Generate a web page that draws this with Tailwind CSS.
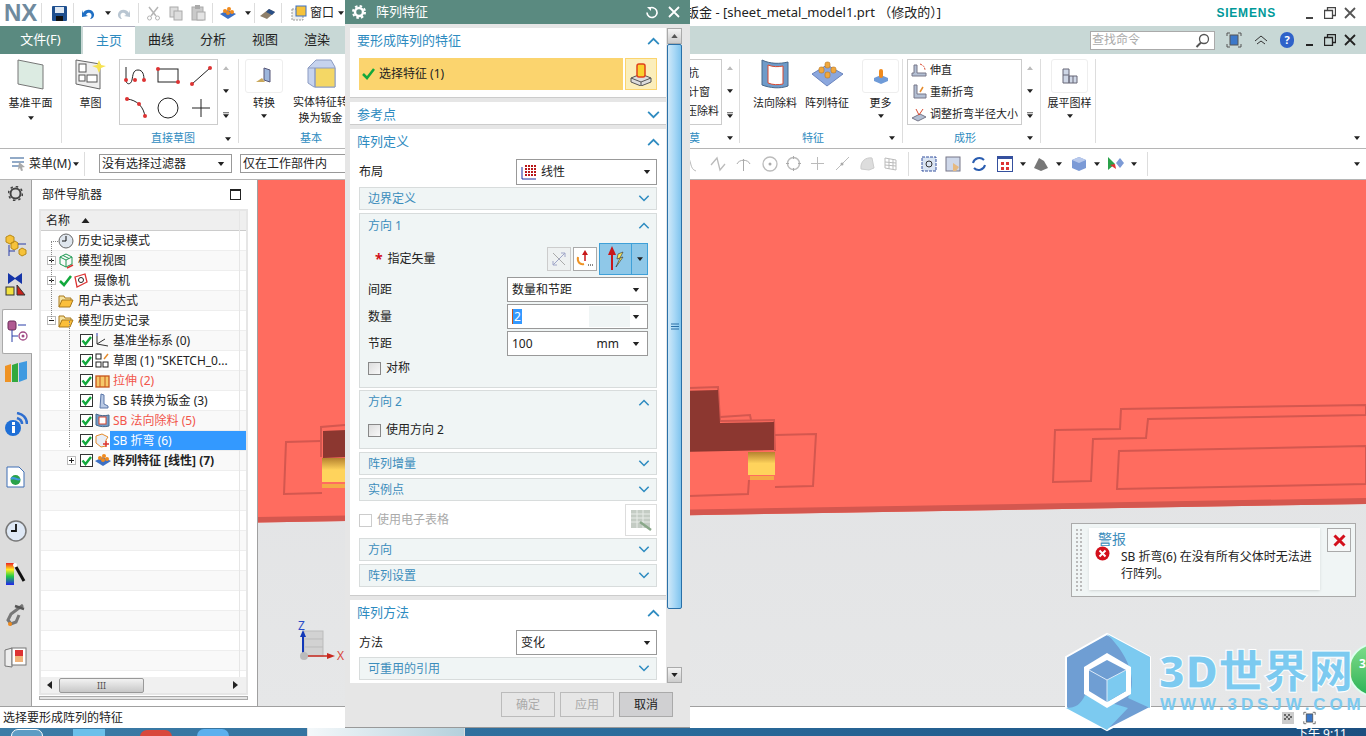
<!DOCTYPE html>
<html lang="en">
<head>
  <meta charset="UTF-8">
  <title>NX 11 - 钣金</title>
  <script src="https://cdn.jsdelivr.net/npm/@tailwindcss/browser@4"></script>
</head>
<body class="relative h-[736px] w-[1366px] overflow-hidden bg-white font-['Noto_Sans','Noto_Sans_CJK_SC',sans-serif] text-xs text-[#222]">

  <!-- shared icons -->
  <svg class="hidden">
    <symbol id="caret" viewBox="0 0 8 5"><polygon points="0,0 8,0 4,5" fill="#222"/></symbol>
    <symbol id="up" viewBox="0 0 14 9"><path d="M1 8 7 2l6 6" fill="none" stroke="#2e8bc0" stroke-width="2"/></symbol>
    <symbol id="down" viewBox="0 0 14 9"><path d="M1 1l6 6 6-6" fill="none" stroke="#2e8bc0" stroke-width="2"/></symbol>
    <symbol id="check" viewBox="0 0 13 13"><rect x=".5" y=".5" width="12" height="12" fill="#fff" stroke="#333"/><path d="M2.5 6.5l3 3.5 5.5-7" fill="none" stroke="#12a83c" stroke-width="2.4"/></symbol>
    <symbol id="plus" viewBox="0 0 9 9"><rect x=".5" y=".5" width="8" height="8" fill="#fff" stroke="#bbb"/><path d="M2 4.5h5M4.500 2v5" stroke="#222"/></symbol>
    <symbol id="minus" viewBox="0 0 9 9"><rect x=".5" y=".5" width="8" height="8" fill="#fff" stroke="#bbb"/><path d="M2 4.500h5" stroke="#222"/></symbol>
    <symbol id="folder" viewBox="0 0 16 14"><path d="M1 13V2h5l1 2h6v2" fill="#f6e3a0" stroke="#a9791c"/><path d="M1 13l3-7h11l-3 7z" fill="#fbbf3b" stroke="#a9791c"/></symbol>
  </svg>

  <!-- title bar -->
  <header class="flex h-[26px] items-center bg-white">
    <span class="ml-[4px] w-[33px] font-['Liberation_Sans',sans-serif] text-[24px] leading-none font-bold text-[#6f8a9e]">NX</span>
    <div class="ml-[4px] h-[20px] w-px bg-[#ddd]"></div>
    <svg class="ml-[10px]" width="15" height="15" viewBox="0 0 15 15"><rect width="15" height="15" rx="1" fill="#1e4f8f"/><rect x="3" y="1" width="9" height="6" fill="#dfe8f2"/><rect x="4" y="10" width="7" height="5" fill="#111"/></svg>
    <div class="ml-[6px] h-[20px] w-px bg-[#ddd]"></div>
    <svg class="ml-[7px]" width="14" height="13" viewBox="0 0 14 13"><path d="M2 6c3-5 10-4 11 1 .5 3-2 5-4 5 2-2 2-5 0-6-2-.7-3 0-4 2l2 1-6 1V3z" fill="#1f6fc4"/></svg>
    <svg class="ml-[10px]" width="6" height="4"><use href="#caret"/></svg>
    <svg class="ml-[6px]" width="14" height="13" viewBox="0 0 14 13"><path d="M12 6C9 1 2 2 1 7c-.5 3 2 5 4 5-2-2-2-5 0-6 2-.7 3 0 4 2L7 9l6 1V3z" fill="#b9c6d2"/></svg>
    <div class="ml-[7px] h-[20px] w-px bg-[#ddd]"></div>
    <svg class="ml-[7px]" width="15" height="15" viewBox="0 0 15 15"><path d="M3 1l7 9M12 1L5 10" stroke="#b5b5b5" stroke-width="1.500"/><circle cx="3.500" cy="12" r="2" fill="none" stroke="#b5b5b5"/><circle cx="11.500" cy="12" r="2" fill="none" stroke="#b5b5b5"/></svg>
    <svg class="ml-[8px]" width="14" height="15" viewBox="0 0 14 15"><rect x="1" y="1" width="8" height="10" fill="#ddd" stroke="#aaa"/><rect x="5" y="5" width="8" height="9" fill="#ddd" stroke="#aaa"/></svg>
    <svg class="ml-[8px]" width="15" height="16" viewBox="0 0 15 16"><rect x="1" y="2" width="11" height="13" fill="#c9c9c9" stroke="#aaa"/><rect x="4" y="0" width="5" height="4" fill="#aaa"/><rect x="6" y="7" width="8" height="8" fill="#e4e4e4" stroke="#aaa"/></svg>
    <div class="ml-[6px] h-[20px] w-px bg-[#ddd]"></div>
    <svg class="ml-[7px]" width="16" height="13" viewBox="0 0 16 13"><path d="M8 3l8 4-8 5-8-5z" fill="#3b6fc4"/><circle cx="5" cy="4" r="2" fill="#f08a1c"/><circle cx="9" cy="2" r="2" fill="#f08a1c"/><circle cx="8" cy="6" r="2" fill="#f08a1c"/><circle cx="12" cy="5" r="2" fill="#f08a1c"/></svg>
    <svg class="ml-[9px]" width="6" height="4"><use href="#caret"/></svg>
    <div class="ml-[3px] h-[20px] w-px bg-[#ddd]"></div>
    <svg class="ml-[4px]" width="17" height="11" viewBox="0 0 17 11"><path d="M1 8l9-7 6 3-8 7z" fill="#8e7f6a"/><path d="M10 1l6 3-3 3-6-3z" fill="#2a4f86"/></svg>
    <div class="ml-[5px] h-[20px] w-px bg-[#ddd]"></div>
    <svg class="ml-[9px]" width="16" height="16" viewBox="0 0 16 16"><rect x="1" y="4" width="11" height="11" fill="#eee" stroke="#999" stroke-dasharray="2 1"/><rect x="5" y="1" width="10" height="10" fill="#f6c23a" stroke="#3b6fc4"/></svg>
    <span class="ml-[3px] text-[12px]">窗口</span>
    <svg class="ml-[4px]" width="6" height="4"><use href="#caret"/></svg>
    <span class="ml-[342px] text-[13px] whitespace-nowrap text-[#222]">钣金 - [sheet_metal_model1.prt （修改的）]</span>
    <span class="ml-auto font-['Liberation_Sans',sans-serif] text-[12px] font-bold tracking-[0.8px] text-[#009999]">SIEMENS</span>
    <span class="ml-[29px] flex w-[54px] items-center justify-between pr-[3px]">
      <svg width="10" height="12" viewBox="0 0 10 12"><path d="M1 11h7" stroke="#444" stroke-width="2"/></svg>
      <svg width="12" height="12" viewBox="0 0 12 12"><path d="M3.500 3V.5h8v8H9M.5 3.500h8v8h-8z" fill="none" stroke="#444" stroke-width="1.300"/></svg>
      <svg width="12" height="12" viewBox="0 0 12 12"><path d="M1 1l10 10M11 1 1 11" stroke="#555" stroke-width="1.800"/></svg>
    </span>
    <span class="w-[7px]"></span>
  </header>

  <!-- tabs -->
  <nav class="flex h-[28px] items-center bg-[#c8d8d6] text-[13px]">
    <div class="flex h-full w-[81px] items-center justify-center bg-[#5a8a80] text-white">文件(F)</div>
    <div class="ml-[2px] flex h-full w-[52px] items-center justify-center border-t border-[#aab] bg-white text-[#2e8bc0]">主页</div>
    <div class="flex w-[52px] justify-center">曲线</div>
    <div class="flex w-[52px] justify-center">分析</div>
    <div class="flex w-[52px] justify-center">视图</div>
    <div class="flex w-[52px] justify-center">渲染</div>
    <div class="ml-auto flex h-[19px] w-[125px] items-center justify-between border border-[#aaa] bg-white pr-[4px] pl-[1px] text-[12px] text-[#aaa]">
      查找命令
      <svg width="15" height="15" viewBox="0 0 15 15"><circle cx="9" cy="6" r="4.500" fill="#fff" stroke="#555" stroke-width="1.300"/><path d="M6 9.500 1.500 14" stroke="#555" stroke-width="2"/></svg>
    </div>
    <svg class="ml-[11px]" width="16" height="16" viewBox="0 0 16 16"><path d="M1 4V1h3M12 1h3v3M15 12v3h-3M4 15H1v-3" fill="none" stroke="#555"/><rect x="4" y="3" width="8" height="10" fill="#3b78c9" stroke="#555"/></svg>
    <svg class="ml-[12px]" width="14" height="10" viewBox="0 0 14 10"><path d="M1 6l6-5 6 5M3 9l4-3 4 3" fill="none" stroke="#333"/></svg>
    <span class="ml-[12px] flex h-[16px] w-[14px] items-center justify-center rounded-full bg-[#2f62c9] text-[11px] font-bold text-white">?</span>
    <span class="ml-[11px] flex w-[54px] items-center justify-between pr-[3px]">
      <svg width="10" height="12" viewBox="0 0 10 12"><path d="M1 11h7" stroke="#222" stroke-width="2"/></svg>
      <svg width="12" height="12" viewBox="0 0 12 12"><path d="M3.500 3V.5h8v8H9M.5 3.500h8v8h-8z" fill="none" stroke="#222" stroke-width="1.300"/></svg>
      <svg width="12" height="12" viewBox="0 0 12 12"><path d="M1 1l10 10M11 1 1 11" stroke="#222" stroke-width="1.800"/></svg>
    </span>
    <span class="w-[7px]"></span>
  </nav>

  <!-- ribbon -->
  <section class="relative flex h-[94px] bg-white text-[11px] leading-[16px]">
    <!-- 基准平面 -->
    <div class="my-[5px] flex w-[62px] flex-col items-center border-r border-[#ddd]">
      <svg width="27" height="31" viewBox="0 0 27 31"><path d="M1 1l25 5v24L1 25z" fill="#dcebe2" stroke="#777"/></svg>
      <span class="mt-[5px]">基准平面</span>
      <svg class="mt-[5px]" width="6" height="4"><use href="#caret"/></svg>
    </div>
    <!-- 直接草图 -->
    <div class="relative my-[5px] w-[177px] border-r border-[#ddd]">
      <div class="flex">
        <div class="ml-[13px] flex w-[31px] flex-col items-center">
          <svg width="31" height="31" viewBox="0 0 31 31"><path d="M1 1l24 4v25L1 25z" fill="#eee" stroke="#666"/><rect x="4" y="5" width="7" height="8" fill="#fff" stroke="#555"/><rect x="4" y="16" width="6" height="6" fill="#fff" stroke="#555"/><rect x="12" y="16" width="10" height="7" fill="#fff" stroke="#555"/><path d="M24 1l2 5 5 1-5 2-2 5-2-5-5-2 5-1z" fill="#f7e34f"/></svg>
          <span class="mt-[5px]">草图</span>
        </div>
        <div class="ml-[13px] grid h-[66px] w-[99px] grid-cols-3 place-items-center border border-[#ccc]">
          <svg width="24" height="20" viewBox="0 0 24 20"><path d="M2 1v13c0 5 5 5 6 0s1-10 6-10 6 5 6 10" fill="none" stroke="#222"/><circle cx="2" cy="14" r="2" fill="#d33"/><circle cx="11" cy="14" r="2" fill="#d33"/><circle cx="20" cy="14" r="2" fill="#d33"/></svg>
          <svg width="24" height="18" viewBox="0 0 24 18"><rect x="2" y="2" width="20" height="13" fill="none" stroke="#222"/><circle cx="2" cy="2" r="2" fill="#d33"/><circle cx="22" cy="15" r="2" fill="#d33"/></svg>
          <svg width="22" height="20" viewBox="0 0 22 20"><path d="M2 18 20 2" stroke="#222"/><circle cx="2" cy="18" r="2" fill="#d33"/><circle cx="20" cy="2" r="2" fill="#d33"/></svg>
          <svg width="24" height="22" viewBox="0 0 24 22"><path d="M3 2c10 1 17 8 18 18" fill="none" stroke="#222"/><circle cx="3" cy="2" r="2" fill="#d33"/><circle cx="15" cy="7" r="2" fill="#d33"/><circle cx="21" cy="19" r="2" fill="#d33"/></svg>
          <svg width="22" height="22" viewBox="0 0 22 22"><circle cx="11" cy="11" r="10" fill="none" stroke="#222"/></svg>
          <svg width="18" height="18" viewBox="0 0 18 18"><path d="M0 9h18M9 0v18" stroke="#222"/></svg>
        </div>
        <div class="ml-[5px] flex h-[66px] w-[6px] flex-col items-center justify-between py-[7px]">
          <svg width="6" height="4" viewBox="0 0 8 5"><polygon points="0,5 8,5 4,0" fill="#bbb"/></svg>
          <svg width="6" height="4"><use href="#caret"/></svg>
          <svg width="6" height="6" viewBox="0 0 8 8"><path d="M0 1h8" stroke="#222"/><polygon points="0,3 8,3 4,8" fill="#222"/></svg>
        </div>
      </div>
      <div class="absolute top-[71px] left-0 w-[166px] pl-[56px] text-center text-[#2e8bc0]">直接草图</div>
      <svg class="absolute top-[78px] left-[163px]" width="6" height="4"><use href="#caret"/></svg>
    </div>
    <!-- 基本 (runs on under the dialog) -->
    <div class="flex w-[451px]">
      <div class="mt-[5px] ml-[6px] flex w-[38px] flex-col items-center">
        <div class="flex h-[34px] w-[38px] items-center justify-center rounded-[3px] border border-[#eee]">
          <svg width="18" height="18" viewBox="0 0 18 18"><path d="M9 1l6 2v12l-6-2z" fill="#9db6dc" stroke="#557"/><path d="M1 15l6-4 3 4z" fill="#c9a85c"/></svg>
        </div>
        <span class="mt-[2px] whitespace-nowrap">转换</span>
        <svg class="mt-[3px]" width="6" height="4"><use href="#caret"/></svg>
      </div>
      <div class="mt-[5px] ml-[10px] flex w-[55px] flex-col items-center">
        <svg width="30" height="32" viewBox="0 0 30 32"><path d="M2 9 10 1h15l4 7v20H8l-6-4z" fill="#c6d3ee" stroke="#8b9bc2"/><path d="M9 9h20v19H9z" fill="#f4d765" stroke="#8b9bc2"/><path d="M2 9l7 0v19" fill="none" stroke="#8b9bc2"/></svg>
        <span class="mt-[3px] whitespace-nowrap">实体特征转</span>
        <span class="whitespace-nowrap">换为钣金</span>
      </div>
      <div class="absolute top-[76px] left-[300px] text-[#2e8bc0]">基本</div>
    </div>
    <!-- group behind the dialog, only its end shows -->
    <div class="relative my-[5px] w-[50px] border-r border-[#ddd]">
      <div class="flex h-[66px] w-[32px] flex-col justify-between border-y border-r border-[#ccc] py-[5px] whitespace-nowrap">
        <span class="-ml-[2px]">抗</span><span class="-ml-[2px]">计窗</span><span class="-ml-[4px]">压除料</span>
      </div>
      <div class="absolute top-[71px] -left-[1px] text-[#2e8bc0]">莫</div>
      <svg class="absolute top-[77px] left-[37px]" width="6" height="4"><use href="#caret"/></svg>
      <div class="absolute top-[7px] left-[37px] flex h-[52px] flex-col items-center justify-between">
        <svg width="6" height="4" viewBox="0 0 8 5"><polygon points="0,5 8,5 4,0" fill="#bbb"/></svg>
        <svg width="6" height="4"><use href="#caret"/></svg>
        <svg width="6" height="6" viewBox="0 0 8 8"><path d="M0 1h8" stroke="#222"/><polygon points="0,3 8,3 4,8" fill="#222"/></svg>
      </div>
    </div>
    <!-- 特征 -->
    <div class="relative my-[5px] flex w-[163px] border-r border-[#ddd]">
      <div class="ml-[10px] flex w-[50px] flex-col items-center">
        <svg width="28" height="31" viewBox="0 0 28 31"><path d="M1 1c8 4 18 4 26 2v24c-8 3-18 2-26-1z" fill="#6f9bc9" stroke="#47688c"/><path d="M7 6c5 2 10 2 15 1v18c-5 1-10 1-15-1z" fill="#fff" stroke="#d9492f"/></svg>
        <span class="mt-[5px] whitespace-nowrap">法向除料</span>
      </div>
      <div class="ml-[2px] flex w-[50px] flex-col items-center">
        <svg width="33" height="29" class="mb-[2px]" viewBox="0 0 33 29"><path d="M16 6l16 9-16 12L1 15z" fill="#8ba7de" stroke="#6a84bd"/><g fill="#f0a83e" stroke="#b87620" stroke-width=".6"><rect x="8" y="8" width="5" height="6" rx="2"/><rect x="14" y="3" width="5" height="6" rx="2"/><rect x="20" y="8" width="5" height="6" rx="2"/><rect x="14" y="13" width="5" height="6" rx="2"/></g></svg>
        <span class="mt-[5px] whitespace-nowrap">阵列特征</span>
      </div>
      <div class="ml-[10px] flex w-[37px] flex-col items-center">
        <div class="flex h-[34px] w-[37px] items-center justify-center rounded-[3px] border border-[#eee]">
          <svg width="16" height="16" viewBox="0 0 16 16"><path d="M8 7l7 3v3l-7 3-7-3v-3z" fill="#6f9bd8"/><rect x="6" y="1" width="4" height="9" rx="2" fill="#f08a1c"/></svg>
        </div>
        <span class="mt-[2px] whitespace-nowrap">更多</span>
        <svg class="mt-[3px]" width="6" height="4"><use href="#caret"/></svg>
      </div>
      <div class="absolute top-[71px] left-[62px] text-[#2e8bc0]">特征</div>
      <svg class="absolute top-[77px] left-[149px]" width="6" height="4"><use href="#caret"/></svg>
    </div>
    <!-- 成形 -->
    <div class="relative my-[5px] w-[138px] border-r border-[#ddd]">
      <div class="ml-[4px] flex h-[66px] w-[115px] flex-col justify-between border border-[#ccc] px-[3px] whitespace-nowrap">
        <div class="flex h-[20px] items-center gap-[3px]"><svg width="16" height="16" viewBox="0 0 16 16"><path d="M1 14h14v-3H6V3H3v8H1z" fill="#b3bfd3" stroke="#778"/><path d="M9 2c3 1 5 3 5 6" fill="none" stroke="#d9492f" stroke-dasharray="2 1"/></svg>伸直</div>
        <div class="flex h-[20px] items-center gap-[3px]"><svg width="16" height="16" viewBox="0 0 16 16"><path d="M3 1h3v9h9v4H3z" fill="#b3bfd3" stroke="#778"/><path d="M9 8l3-5" stroke="#e58b2b" stroke-width="1.500"/></svg>重新折弯</div>
        <div class="flex h-[20px] items-center gap-[3px]"><svg width="16" height="16" viewBox="0 0 16 16"><path d="M1 12l6 3 8-4-6-3z" fill="#b3bfd3" stroke="#778"/><path d="M8 9 5 3M8 9l4-6" stroke="#d9492f"/></svg>调整折弯半径大小</div>
      </div>
      <div class="absolute top-[7px] left-[124px] flex h-[52px] flex-col items-center justify-between">
        <svg width="6" height="4" viewBox="0 0 8 5"><polygon points="0,5 8,5 4,0" fill="#bbb"/></svg>
        <svg width="6" height="4"><use href="#caret"/></svg>
        <svg width="6" height="6" viewBox="0 0 8 8"><path d="M0 1h8" stroke="#222"/><polygon points="0,3 8,3 4,8" fill="#222"/></svg>
      </div>
      <div class="absolute top-[71px] left-[51px] text-[#2e8bc0]">成形</div>
      <svg class="absolute top-[77px] left-[124px]" width="6" height="4"><use href="#caret"/></svg>
    </div>
    <!-- 展平图样 -->
    <div class="my-[5px] flex w-[55px] flex-col items-center border-r border-[#ddd] pl-[3px]">
      <div class="flex h-[34px] w-[37px] items-center justify-center rounded-[3px] border border-[#eee]">
        <svg width="16" height="16" viewBox="0 0 16 16"><path d="M1 1h6v14H1zM7 8h8v7H7zM1 7h6M11 8v7" fill="#cfd7e6" stroke="#667"/></svg>
      </div>
      <span class="mt-[2px] whitespace-nowrap">展平图样</span>
      <svg class="mt-[3px]" width="6" height="4"><use href="#caret"/></svg>
    </div>
    <svg class="absolute top-[82px] right-[6px]" width="6" height="4"><use href="#caret"/></svg>
  </section>

  <!-- selection bar -->
  <section class="flex h-[32px] items-center border-y border-[#b5b5b5] bg-white pb-[1px]">
    <svg class="ml-[10px]" width="16" height="14" viewBox="0 0 16 14"><path d="M0 1h14M2 5h12M2 9h8" stroke="#6f8fb5" stroke-width="1.500"/><path d="M9 5l6 5-3 .5 1 3-2 .5-1-3-2 2z" fill="#aaa"/></svg>
    <span class="ml-[3px] text-[12px] whitespace-nowrap">菜单(M)</span>
    <svg class="ml-[2px]" width="6" height="4"><use href="#caret"/></svg>
    <div class="ml-[5px] h-[24px] w-px bg-[#ddd]"></div>
    <div class="ml-[14px] flex h-[19px] w-[133px] items-center justify-between border border-[#999] pr-[6px] pl-[2px]">没有选择过滤器<svg width="8" height="4"><use href="#caret"/></svg></div>
    <div class="ml-[8px] flex h-[19px] w-[120px] items-center border border-[#999] pl-[2px]">仅在工作部件内</div>
    <div class="ml-[324px] flex h-full items-center text-[#bbb]">
      <svg class="mr-[12px] ml-[2px]" width="12" height="18" viewBox="0 0 12 18"><path d="M1 2c5 2 2 12 9 14" fill="none" stroke="#bbb"/></svg>
      <svg class="mr-[10px]" width="16" height="16" viewBox="0 0 16 16"><path d="M1 9l6-7 3 12 5-6" fill="none" stroke="#bbb" stroke-width="1.300"/></svg>
      <svg class="mr-[11px]" width="15" height="15" viewBox="0 0 15 15"><path d="M7.500 15V3M1 8c2-5 11-5 13 0" fill="none" stroke="#aaa"/></svg>
      <svg class="mr-[8px]" width="16" height="16" viewBox="0 0 16 16"><circle cx="8" cy="8" r="7" fill="none" stroke="#bbb" stroke-width="1.300"/><circle cx="8" cy="8" r="1.500" fill="#aaa"/></svg>
      <svg class="mr-[10px]" width="15" height="15" viewBox="0 0 15 15"><circle cx="7.500" cy="7.500" r="6" fill="none" stroke="#bbb" stroke-width="1.500"/><path d="M7.500 0v3M7.500 12v3M0 7.500h3M12 7.500h3" stroke="#aaa"/></svg>
      <svg class="mr-[11px]" width="13" height="13" viewBox="0 0 13 13"><path d="M6.500 0v13M0 6.500h13" stroke="#bbb"/></svg>
      <svg class="mr-[9px]" width="15" height="15" viewBox="0 0 15 15"><path d="M1 14 14 1" stroke="#bbb"/><circle cx="7" cy="8" r="1.500" fill="#aaa"/></svg>
      <svg class="mr-[9px]" width="16" height="16" viewBox="0 0 16 16"><path d="M2 13C1 5 7 1 13 2l2 10-5 2z" fill="#ddd" stroke="#ccc"/></svg>
      <svg width="13" height="14" viewBox="0 0 13 14"><path d="M1 1l11 2v10L1 11zM1 5l11 1M1 8l11 1M5 2v10M9 2v10" fill="none" stroke="#bbb"/></svg>
      <div class="mr-[12px] ml-[11px] h-[24px] w-px bg-[#ddd]"></div>
      <svg width="16" height="16" viewBox="0 0 16 16"><rect x="1" y="1" width="14" height="14" fill="#dbe5f3" stroke="#35509e" stroke-dasharray="3 1"/><circle cx="8" cy="8" r="3" fill="none" stroke="#333"/></svg>
      <svg class="ml-[8px]" width="16" height="16" viewBox="0 0 16 16"><rect x="1" y="1" width="14" height="14" fill="#cfd8ea" stroke="#778"/><path d="M8 7l6 4-3 4H8z" fill="#e6b980"/></svg>
      <svg class="ml-[10px]" width="16" height="16" viewBox="0 0 16 16"><path d="M13 4A6.500 6.500 0 0 0 2 7M3 12a6.500 6.500 0 0 0 11-3" fill="none" stroke="#2a5db0" stroke-width="2"/></svg>
      <svg class="ml-[10px]" width="16" height="16" viewBox="0 0 16 16"><rect x=".5" y=".5" width="15" height="15" fill="#fff" stroke="#35509e"/><rect y="0" width="16" height="3" fill="#35509e"/><path d="M4 6h3v3H4zM9 6h3v3H9zM4 11h3v3H4zM9 11h3v3H9z" fill="#d33"/></svg>
      <svg class="ml-[7px]" width="6" height="4"><use href="#caret"/></svg>
      <svg class="ml-[7px]" width="16" height="15" viewBox="0 0 16 15"><path d="M1 12l5-10 5 3 4 7-7 3z" fill="#777"/></svg>
      <svg class="ml-[7px]" width="6" height="4"><use href="#caret"/></svg>
      <svg class="ml-[9px]" width="16" height="16" viewBox="0 0 16 16"><path d="M8 1l7 3v8l-7 3-7-3V4z" fill="#7b9ad6"/><path d="M1 4l7 3 7-3L8 1z" fill="#b8c9ec"/></svg>
      <svg class="ml-[7px]" width="6" height="4"><use href="#caret"/></svg>
      <svg class="ml-[7px]" width="17" height="15" viewBox="0 0 17 15"><path d="M1 1v13l7-6z" fill="#2aa24a"/><path d="M9 7l4-5 4 5-4 5z" fill="#7b9ad6"/><path d="M3 9l5-1 1 5z" fill="#d33"/></svg>
      <svg class="ml-[7px]" width="6" height="4"><use href="#caret"/></svg>
      <div class="ml-[10px] h-[24px] w-px bg-[#ddd]"></div>
    </div>
    <svg class="mr-[6px] ml-auto" width="6" height="4"><use href="#caret"/></svg>
  </section>

  <!-- main area -->
  <main class="flex h-[526px]">
    <!-- resource bar -->
    <aside class="flex w-[32px] shrink-0 flex-col items-center border-r border-[#a0a0a0] bg-[#dcdcdc]">
      <svg class="mt-[6px]" width="15" height="15" viewBox="0 0 15 15"><circle cx="7.500" cy="7.500" r="5" fill="none" stroke="#444" stroke-width="2"/><circle cx="7.500" cy="7.500" r="7" fill="none" stroke="#444" stroke-width="1.500" stroke-dasharray="2.500 3"/></svg>
      <svg class="mt-[33px]" width="22" height="24" viewBox="0 0 22 24"><path d="M1 3l4-2 4 2v5l-4 2-4-2zM6 9l4-2 3 2v5l-4 2-3-2z" fill="#f6c23a" stroke="#b98a16"/><path d="M4 11v11M4 17h6M13 10h8" stroke="#2a3fa8" fill="none"/><path d="M14 16l3-2 4 2v4l-4 2-3-2z" fill="#f6c23a" stroke="#b98a16"/></svg>
      <svg class="mt-[15px]" width="21" height="23" viewBox="0 0 21 23"><path d="M3 0l7 5 7-5v11l-7-5-7 5z" fill="#1534a8"/><rect x="1" y="14" width="8" height="8" fill="#f2e23f" stroke="#333"/><path d="M12 22V12l8 10z" fill="#c8221b" stroke="#333"/></svg>
      <div class="mt-[13px] -mr-px flex h-[45px] w-[30px] items-center justify-center self-end rounded-l-[2px] border-y border-l border-[#aaa] bg-white">
        <svg width="22" height="24" viewBox="0 0 22 24"><rect x="1" y="1" width="8" height="9" rx="2" fill="#b05a92" stroke="#6b2c58"/><path d="M5 10v12M5 16h6M11 5h8" stroke="#2a3fa8" fill="none"/><circle cx="16" cy="16" r="4" fill="#fff" stroke="#a14a85" stroke-width="1.300"/><circle cx="16" cy="16" r="1.500" fill="#a14a85"/></svg>
      </div>
      <svg class="mt-[6px]" width="24" height="24" viewBox="0 0 24 24"><path d="M1 6l6-2v18H1z" fill="#ef9324"/><path d="M8 5l6-2v19H8z" fill="#33a93f"/><path d="M15 3l8-2v18l-8 3z" fill="#3f9ae0"/></svg>
      <svg class="mt-[28px]" width="24" height="26" viewBox="0 0 24 26"><path d="M13 1c6 1 10 5 10 11M13 6c3 1 5 3 5 6" fill="none" stroke="#2f6fd0" stroke-width="2.500"/><circle cx="9" cy="16" r="8" fill="#1f6fd6"/><rect x="8" y="14" width="3" height="7" fill="#fff"/><rect x="8" y="10" width="3" height="3" fill="#fff"/></svg>
      <svg class="mt-[28px]" width="20" height="22" viewBox="0 0 20 22"><path d="M1 1h12l5 5v15H1z" fill="#fff" stroke="#3f6fb5"/><circle cx="9.500" cy="14" r="5" fill="#2aa24a"/><path d="M5 13c3-3 6 2 9 0" stroke="#3f9ae0" fill="none" stroke-width="2"/></svg>
      <svg class="mt-[32px]" width="22" height="22" viewBox="0 0 22 22"><circle cx="11" cy="11" r="10" fill="#dfe9f6" stroke="#777" stroke-width="1.500"/><path d="M11 4v7h-5" fill="none" stroke="#111" stroke-width="1.800"/></svg>
      <svg class="mt-[20px]" width="21" height="23" viewBox="0 0 21 23"><defs><linearGradient id="sp" x1="0" y1="0" x2="0" y2="1"><stop offset="0" stop-color="#e22"/><stop offset=".3" stop-color="#fe2"/><stop offset=".6" stop-color="#2c4"/><stop offset="1" stop-color="#22e"/></linearGradient></defs><rect x="1" y="1" width="8" height="22" fill="url(#sp)"/><path d="M11 5l8 14" stroke="#111" stroke-width="3"/><circle cx="10" cy="3" r="2" fill="#fff"/></svg>
      <svg class="mt-[19px]" width="20" height="22" viewBox="0 0 20 22"><path d="M17 1 5 10l-3 6 3 4 5-2 3-7" fill="none" stroke="#777" stroke-width="3"/><path d="M9 2l9 3" stroke="#555" stroke-width="2.500"/><circle cx="4" cy="20" r="2" fill="#f08a1c"/></svg>
      <svg class="mt-[21px]" width="23" height="21" viewBox="0 0 23 21"><path d="M1 3l7-2v19l-7-1z" fill="#eee" stroke="#777"/><rect x="8" y="1" width="14" height="17" fill="#fff" stroke="#777"/><rect x="11" y="3" width="8" height="6" fill="#d33"/><rect x="11" y="9" width="8" height="6" fill="#f0b37a"/></svg>
    </aside>

    <!-- part navigator -->
    <div class="relative w-[226px] shrink-0 border-r border-[#a0a0a0] bg-white">
      <div class="flex h-[29px] items-center justify-between pr-[16px] pl-[10px]">
        <span>部件导航器</span>
        <span class="h-[11px] w-[11px] border border-t-2 border-[#222]"></span>
      </div>
      <div class="relative mx-[7px] flex h-[486px] w-[209px] flex-col overflow-hidden border-2 border-[#e6e6e6] text-[12px]">
        <div class="flex h-[20px] shrink-0 items-center border-b border-[#ccc] bg-[#efefef] pl-[5px]">名称<svg class="ml-[11px]" width="9" height="5" viewBox="0 0 8 5"><polygon points="0,5 8,5 4,0" fill="#222"/></svg></div>
        <div class="flex h-[20px] shrink-0 items-center border-b border-[#eee] pl-[17px]"><svg width="16" height="16" viewBox="0 0 16 16"><circle cx="8" cy="8" r="7" fill="#dfe6ee" stroke="#666"/><path d="M8 3v5H4" fill="none" stroke="#111"/></svg><span class="ml-[4px]">历史记录模式</span></div>
        <div class="flex h-[20px] shrink-0 items-center border-b border-[#eee] bg-[#f9f9f9] pl-[6px]"><svg width="9" height="9"><use href="#plus"/></svg><svg class="ml-[2px]" width="16" height="16" viewBox="0 0 16 16"><path d="M8 1l6 3v7l-6 3-6-3V4zM2 4l6 3 6-3M8 7v7M5 2.500l6 3" fill="none" stroke="#1e9a52"/><path d="M9 15l6-3" stroke="#d33" stroke-width="1.500"/></svg><span class="ml-[4px]">模型视图</span></div>
        <div class="flex h-[20px] shrink-0 items-center border-b border-[#eee] pl-[6px]"><svg width="9" height="9"><use href="#plus"/></svg><svg class="ml-[3px]" width="13" height="12" viewBox="0 0 13 12"><path d="M1 6l4 4 7-9" fill="none" stroke="#12a83c" stroke-width="2.500"/></svg><svg class="ml-[2px]" width="15" height="15" viewBox="0 0 15 15"><path d="M1 4l10-3 2 8-10 5z" fill="#fff" stroke="#d33" stroke-width="1.300"/><circle cx="7" cy="7" r="2.500" fill="none" stroke="#222"/></svg><span class="ml-[5px]">摄像机</span></div>
        <div class="flex h-[20px] shrink-0 items-center border-b border-[#eee] bg-[#f9f9f9] pl-[17px]"><svg width="16" height="14"><use href="#folder"/></svg><span class="ml-[4px]">用户表达式</span></div>
        <div class="flex h-[20px] shrink-0 items-center border-b border-[#eee] pl-[6px]"><svg width="9" height="9"><use href="#minus"/></svg><svg class="ml-[2px]" width="16" height="14"><use href="#folder"/></svg><span class="ml-[4px]">模型历史记录</span></div>
        <div class="flex h-[20px] shrink-0 items-center border-b border-[#eee] bg-[#f9f9f9] pl-[39px]"><svg width="13" height="13"><use href="#check"/></svg><svg class="ml-[2px]" width="15" height="15" viewBox="0 0 15 15"><path d="M2 3v8l11 2M2 11l8-5" fill="none" stroke="#333"/><path d="M2 0v3" stroke="#2a3fa8"/></svg><span class="ml-[3px]">基准坐标系 (0)</span></div>
        <div class="flex h-[20px] shrink-0 items-center border-b border-[#eee] pl-[39px]"><svg width="13" height="13"><use href="#check"/></svg><svg class="ml-[2px]" width="15" height="15" viewBox="0 0 15 15"><rect x="1" y="1" width="5" height="5" fill="#fff" stroke="#222"/><rect x="1" y="9" width="5" height="5" fill="#fff" stroke="#222"/><rect x="8" y="9" width="5" height="5" fill="#fff" stroke="#222"/><path d="M9 6l4-5" stroke="#e58b2b" stroke-width="1.500"/></svg><span class="ml-[3px] whitespace-nowrap">草图 (1) "SKETCH_0...</span></div>
        <div class="flex h-[20px] shrink-0 items-center border-b border-[#eee] bg-[#f9f9f9] pl-[39px] text-[#f2554a]"><svg width="13" height="13"><use href="#check"/></svg><svg class="ml-[2px]" width="15" height="14" viewBox="0 0 15 14"><rect x="1" y="2" width="13" height="11" fill="#f6c86a" stroke="#c8541b" stroke-width="1.300"/><path d="M5 2v11M10 2v11" stroke="#c8541b"/></svg><span class="ml-[3px]">拉伸 (2)</span></div>
        <div class="flex h-[20px] shrink-0 items-center border-b border-[#eee] pl-[39px]"><svg width="13" height="13"><use href="#check"/></svg><svg class="ml-[2px]" width="15" height="16" viewBox="0 0 15 16"><path d="M6 1l3 1v9l4 2v2H5z" fill="#b9c9e4" stroke="#5a76a8"/></svg><span class="ml-[3px]">SB 转换为钣金 (3)</span></div>
        <div class="flex h-[20px] shrink-0 items-center border-b border-[#eee] bg-[#f9f9f9] pl-[39px] text-[#f2554a]"><svg width="13" height="13"><use href="#check"/></svg><svg class="ml-[2px]" width="15" height="15" viewBox="0 0 15 15"><path d="M1 1c4 2 9 2 13 1v11c-4 1-9 1-13-1z" fill="#6f9bc9" stroke="#47688c"/><rect x="4" y="4" width="7" height="7" fill="#fff" stroke="#d9492f"/></svg><span class="ml-[3px]">SB 法向除料 (5)</span></div>
        <div class="flex h-[20px] shrink-0 items-center border-b border-[#eee] pl-[39px]"><svg width="13" height="13"><use href="#check"/></svg><svg class="ml-[2px]" width="15" height="15" viewBox="0 0 15 15"><path d="M1 3l6-2 6 3-2 3v6l-5 1-5-4z" fill="#e9eef6" stroke="#e58b2b"/><path d="M8 11h6M11 8v6" stroke="#d33" stroke-width="1.300"/></svg><span class="z-10 flex h-[19px] flex-1 items-center bg-[#3399ff] pl-[3px] text-white">SB 折弯 (6)</span></div>
        <div class="flex h-[20px] shrink-0 items-center border-b border-[#eee] bg-[#f9f9f9] pl-[26px] font-bold"><svg width="9" height="9"><use href="#plus"/></svg><svg class="ml-[4px]" width="13" height="13"><use href="#check"/></svg><svg class="ml-[2px]" width="16" height="13" viewBox="0 0 16 13"><path d="M8 3l8 4-8 5-8-5z" fill="#3b6fc4"/><circle cx="5" cy="4" r="2" fill="#f08a1c"/><circle cx="9" cy="2" r="2" fill="#f08a1c"/><circle cx="8" cy="6" r="2" fill="#f08a1c"/><circle cx="12" cy="5" r="2" fill="#f08a1c"/></svg><span class="ml-[2px] whitespace-nowrap">阵列特征 [线性] (7)</span></div>
        <div class="h-[20px] shrink-0 border-b border-[#eee]"></div>
        <div class="h-[20px] shrink-0 border-b border-[#eee] bg-[#f9f9f9]"></div>
        <div class="h-[20px] shrink-0 border-b border-[#eee]"></div>
        <div class="h-[20px] shrink-0 border-b border-[#eee] bg-[#f9f9f9]"></div>
        <div class="h-[20px] shrink-0 border-b border-[#eee]"></div>
        <div class="h-[20px] shrink-0 border-b border-[#eee] bg-[#f9f9f9]"></div>
        <div class="h-[20px] shrink-0 border-b border-[#eee]"></div>
        <div class="h-[20px] shrink-0 border-b border-[#eee] bg-[#f9f9f9]"></div>
        <div class="h-[20px] shrink-0 border-b border-[#eee]"></div>
        <div class="h-[20px] shrink-0 border-b border-[#eee] bg-[#f9f9f9]"></div>
        <div class="mt-auto flex h-[16px] shrink-0 items-center bg-[#f0f0f0] pr-[8px] pl-[6px]">
          <svg width="5" height="8" viewBox="0 0 5 8"><polygon points="5,0 5,8 0,4" fill="#222"/></svg>
          <div class="ml-[7px] flex h-[15px] w-[85px] items-center justify-center rounded-[2px] border border-[#999] bg-gradient-to-b from-[#f2f2f2] to-[#c8c8c8] text-[9px] leading-none text-[#555]">III</div>
          <svg class="ml-auto" width="5" height="8" viewBox="0 0 5 8"><polygon points="0,0 0,8 5,4" fill="#222"/></svg>
        </div>
        <!-- column edge and tree connector lines -->
        <div class="absolute top-0 right-[6px] bottom-[16px] w-px bg-[#e6e6e6]"></div>
        <div class="absolute top-[30px] left-[10px] h-[78px] w-px border-l border-dotted border-[#888]"></div>
        <div class="absolute top-[30px] left-[10px] w-[7px] border-t border-dotted border-[#888]"></div>
        <div class="absolute top-[110px] left-[28px] h-[126px] w-px border-l border-dotted border-[#888]"></div>
      </div>
      <div class="mx-[7px] mt-px h-[4px] w-[209px] border border-[#aaa] bg-[#e4e4e4]"></div>
    </div>

    <!-- graphics window: free canvas -->
    <div class="relative flex-1 overflow-hidden bg-gradient-to-b from-[#dfe0e2] to-[#e6e7e8]">
      <svg class="absolute inset-0" width="1108" height="526" viewBox="258 180 1108 526">
        <polygon points="258,180 1366,180 1366,504 258,522.500" fill="#ff6c5f"/>
        <polygon points="258,517 1366,498 1366,504 258,522.500" fill="#d4574f"/>
        <g fill="none" stroke="#d4574f" stroke-width="2">
          <polygon points="1366,405 1121,409 1120,429 1055,430 1053,482 1091,481 1093,439 1146,438 1148,419 1366,415"/>
          <polygon points="1366,446 1119,451 1117,489 1366,484"/>
          <polyline points="321,441 286,442 284,494 322,493"/>
          <polyline points="720,417 750,415 751,420"/>
          <polyline points="775,435 816,434 813,486 775,487"/>
          <polyline points="689,496 748,494 749,480"/>
          <polyline points="321,457 321,427 345,425"/>
          <polyline points="689,388 718,387 720,421 774,420 775,451"/>
        </g>
        <polygon points="323,431 346,430 346,457 323,458" fill="#8c3730"/>
        <polygon points="680,391 718,390 720,423 774,422 774,450 680,452" fill="#8c3730"/>
        <defs><linearGradient id="y" x1="0" y1="0" x2="0" y2="1"><stop offset="0" stop-color="#b5822f"/><stop offset=".5" stop-color="#ffd35c"/><stop offset="1" stop-color="#ffd35c"/></linearGradient></defs>
        <rect x="322" y="458" width="24" height="24" fill="url(#y)"/><rect x="322" y="484" width="24" height="4" fill="#f5a947"/>
        <rect x="748" y="452" width="27" height="23" fill="url(#y)"/><rect x="750" y="476" width="24" height="4" fill="#f5a947"/>
        <!-- triad -->
        <rect x="304" y="631" width="19" height="25" fill="#d2d2d2" stroke="#bbb"/><path d="M305 639h18M305 647h18" stroke="#bbb"/>
        <path d="M303 654V634" stroke="#1238b8" stroke-width="2"/><polygon points="303,630 300,637 306,637" fill="#1238b8"/>
        <path d="M306 656h26" stroke="#c8281e" stroke-width="1.500"/><polygon points="335,656 327,653 327,659" fill="#c8281e"/>
        <circle cx="304" cy="656" r="4" fill="#bbb"/>
      </svg>
      <span class="absolute top-[440px] left-[40px] text-[12px] leading-none text-[#2a4bc8]">Z</span>
      <span class="absolute top-[470px] left-[79px] text-[12px] leading-none text-[#d9483c]">X</span>
    </div>
  </main>

  <!-- status bar -->
  <footer class="relative flex h-[22px] items-center border-t border-[#a0a0a0] bg-white pl-[3px] text-[12px]">
    选择要形成阵列的特征
    <svg class="absolute top-[5px] left-[1282px]" width="12" height="12" viewBox="0 0 12 12"><rect width="12" height="12" fill="#ccc"/><path d="M2 2h2v2H2zM6 2h2v2H6zM4 4h2v2H4zM8 4h2v2H8zM2 6h2v2H2zM6 6h2v2H6z" fill="#666"/></svg>
    <svg class="absolute top-[3px] left-[1303px]" width="13" height="16" viewBox="0 0 16 16"><path d="M1 4V1h3M12 1h3v3M15 12v3h-3M4 15H1v-3" fill="none" stroke="#555"/><rect x="4" y="3" width="8" height="10" fill="#3b78c9" stroke="#555"/></svg>
  </footer>

  <!-- windows taskbar, almost cut off -->
  <div class="relative h-[8px] overflow-hidden bg-gradient-to-r from-[#3d7ca6] via-[#2a6a9a] to-[#1b4f80]">
    <span class="absolute top-[1px] left-[11px] h-[14px] w-[32px] rounded-full border border-white bg-[#5d9cc4]"></span>
    <span class="absolute top-[1px] left-[73px] h-[7px] w-[32px] bg-[#6cc0ea]"></span>
    <span class="absolute top-[2px] left-[140px] h-[14px] w-[32px] rounded-full bg-[#d9483c]"></span>
    <span class="absolute top-[1px] left-[197px] h-[14px] w-[32px] rounded-full bg-[#5cb0ee]"></span>
    <span class="absolute top-0 left-[307px] h-[8px] w-[158px] border-x border-[#ddd] bg-gradient-to-r from-[#f4f8fa] to-[#b4d0dc]"></span>
    <span class="absolute -top-[1px] left-[1296px] text-[12px] leading-[14px] text-white">下午 9:11</span>
  </div>

  <!-- feature pattern dialog -->
  <div class="absolute top-0 left-[345px] h-[728px] w-[345px] border-b border-[#999] bg-[#e6e6e6]">
    <div class="flex h-[24px] items-center bg-[#5a8a80] pr-[10px] pl-[7px] text-[13px] text-white">
      <svg width="14" height="14" viewBox="0 0 14 14"><circle cx="7" cy="7" r="4" fill="none" stroke="#fff" stroke-width="2.500"/><circle cx="7" cy="7" r="6" fill="none" stroke="#fff" stroke-width="2" stroke-dasharray="2.500 2.200"/></svg>
      <span class="ml-[10px]">阵列特征</span>
      <svg class="ml-auto" width="13" height="13" viewBox="0 0 13 13"><path d="M3 2.500a5 5 0 1 1-2 4" fill="none" stroke="#fff" stroke-width="1.600"/><polygon points="1,1 5,1 5,5" fill="#fff"/></svg>
      <svg class="ml-[9px]" width="12" height="12" viewBox="0 0 12 12"><path d="M1 1l10 10M11 1 1 11" stroke="#fff" stroke-width="1.800"/></svg>
    </div>
    <div class="flex pt-[4px] pl-[5px]">
      <div class="w-[316px] text-[12px]">
        <!-- features to pattern -->
        <div class="h-[70px] border-b border-[#ccc] bg-white">
          <div class="flex h-[26px] items-center justify-between pr-[6px] pl-[7px] text-[13px] text-[#2e8bc0]">要形成阵列的特征<svg width="13" height="8"><use href="#up"/></svg></div>
          <div class="mt-[4px] ml-[9px] flex h-[32px] gap-[2px]">
            <div class="flex w-[264px] items-center bg-[#fbd46e] pl-[3px]"><svg width="13" height="12" viewBox="0 0 13 12"><path d="M1 6l4 4 7-9" fill="none" stroke="#12a83c" stroke-width="2.500"/></svg><span class="ml-[4px]">选择特征 (1)</span></div>
            <div class="flex w-[32px] items-center justify-center border border-[#fbd46e] bg-[#fbeebb]">
              <svg width="22" height="23" viewBox="0 0 22 23"><path d="M11 11l10 4v4l-10 4-10-4v-4z" fill="#ddd" stroke="#555"/><path d="M1 15l10 4 10-4M11 19v4" fill="none" stroke="#555"/><rect x="7" y="1" width="8" height="13" rx="2" fill="#f9d12f" stroke="#e0421c" stroke-width="1.500"/></svg>
            </div>
          </div>
        </div>
        <!-- reference point -->
        <div class="mt-[4px] flex h-[23px] items-center justify-between border-b border-[#ccc] bg-white pt-[3px] pr-[6px] pl-[7px] text-[13px] text-[#2e8bc0]">参考点<svg width="13" height="8"><use href="#down"/></svg></div>
        <!-- pattern definition -->
        <div class="mt-[4px] h-[467px] border-b border-[#ccc] bg-white">
          <div class="flex h-[26px] items-center justify-between pr-[6px] pl-[7px] text-[13px] text-[#2e8bc0]">阵列定义<svg width="13" height="8"><use href="#up"/></svg></div>
          <div class="mt-[4px] flex h-[26px] items-center justify-between pr-[9px] pl-[9px]">
            布局
            <div class="flex h-[26px] w-[141px] items-center border border-[#999] pr-[5px] pl-[4px]">
              <svg width="16" height="16" viewBox="0 0 16 16"><path d="M1 3v12h14" fill="none" stroke="#1c2f9e"/><g fill="#b8181a"><rect x="4" y="1" width="2" height="2"/><rect x="7" y="1" width="2" height="2"/><rect x="10" y="1" width="2" height="2"/><rect x="13" y="1" width="2" height="2"/><rect x="4" y="4" width="2" height="2"/><rect x="7" y="4" width="2" height="2"/><rect x="10" y="4" width="2" height="2"/><rect x="13" y="4" width="2" height="2"/><rect x="4" y="7" width="2" height="2"/><rect x="7" y="7" width="2" height="2"/><rect x="10" y="7" width="2" height="2"/><rect x="13" y="7" width="2" height="2"/><rect x="4" y="10" width="2" height="2"/><rect x="7" y="10" width="2" height="2"/><rect x="10" y="10" width="2" height="2"/><rect x="13" y="10" width="2" height="2"/></g></svg>
              <span class="ml-[4px]">线性</span>
              <svg class="ml-auto" width="8" height="4"><use href="#caret"/></svg>
            </div>
          </div>
          <div class="mx-[9px] mt-[2px] flex h-[23px] items-center justify-between border border-[#d8dcdc] bg-[#f0f5f5] pr-[6px] pl-[8px] text-[#3c8dbc]">边界定义<svg width="12" height="7"><use href="#down"/></svg></div>

          <!-- direction 1 -->
          <div class="mx-[9px] mt-[3px] h-[175px] border border-[#d8dcdc] bg-[#f0f5f5]">
            <div class="flex h-[23px] items-center justify-between pr-[6px] pl-[8px] text-[#3c8dbc]">方向 1<svg width="12" height="7"><use href="#up"/></svg></div>
            <div class="mt-[6px] flex h-[32px] items-center pr-[8px] pl-[15px]">
              <span class="text-[14px] leading-none font-bold text-[#d3101c]">*</span>
              <span class="ml-[5px]">指定矢量</span>
              <div class="ml-auto flex h-[24px] w-[24px] items-center justify-center border border-[#ccc] bg-[#eef1f1]">
                <svg width="14" height="14" viewBox="0 0 14 14"><path d="M1 1l12 12" stroke="#aaa"/><path d="M13 1 1 13M13 1H9M13 1v4M1 13h4M1 13V9" fill="none" stroke="#a0a6c8"/></svg>
              </div>
              <div class="ml-[2px] flex h-[24px] w-[24px] items-center justify-center border border-[#aaa] bg-white">
                <svg width="18" height="18" viewBox="0 0 18 18"><path d="M9 11V2" stroke="#c8181a" stroke-width="1.500"/><polygon points="9,0 6,5 12,5" fill="#c8181a"/><path d="M2 7c-1 5 2 8 6 7" fill="none" stroke="#ef9324" stroke-width="2"/><path d="M12 15h1M14 15h1M16 15h1" stroke="#111"/></svg>
              </div>
              <div class="ml-[2px] flex h-[32px] w-[49px] border border-[#3fa0d8] bg-[#8fc8e8]">
                <div class="flex w-[32px] items-center justify-center border-r border-[#3fa0d8]">
                  <svg width="20" height="26" viewBox="0 0 20 26"><path d="M6 24V6" stroke="#c8181a" stroke-width="2"/><polygon points="6,0 2,9 10,9" fill="#c8181a"/><path d="M17 6l-5 2-1 5 3-1-4 9 7-10-3 1z" fill="#f9e65c" stroke="#333" stroke-width=".6"/></svg>
                </div>
                <div class="flex flex-1 items-center justify-center"><svg width="6" height="4"><use href="#caret"/></svg></div>
              </div>
            </div>
            <div class="mt-[2px] flex h-[25px] items-center justify-between pr-[8px] pl-[8px]">间距
              <div class="flex h-[25px] w-[141px] items-center justify-between border border-[#999] bg-white pr-[7px] pl-[4px]">数量和节距<svg width="8" height="4"><use href="#caret"/></svg></div>
            </div>
            <div class="mt-[2px] flex h-[25px] items-center justify-between pr-[8px] pl-[8px]">数量
              <div class="flex h-[25px] w-[141px] items-center border border-[#999] bg-white pr-[7px] pl-[4px]">
                <span class="border-l border-[#c8541b] bg-[#3399ff] px-px leading-[15px] text-white">2</span>
                <span class="ml-[67px] h-[21px] w-[41px] bg-[#f0f5f5]"></span>
                <svg class="ml-auto" width="8" height="4"><use href="#caret"/></svg>
              </div>
            </div>
            <div class="mt-[2px] flex h-[25px] items-center justify-between pr-[8px] pl-[8px]">节距
              <div class="flex h-[25px] w-[141px] items-center border border-[#999] bg-white pr-[7px] pl-[4px]">100<span class="mr-[13px] ml-auto">mm</span><svg width="8" height="4"><use href="#caret"/></svg></div>
            </div>
            <div class="mt-[4px] flex h-[16px] items-center pl-[8px]">
              <span class="h-[13px] w-[13px] border border-[#888] bg-gradient-to-br from-[#ddd] to-[#f8f8f8]"></span>
              <span class="ml-[5px]">对称</span>
            </div>
          </div>

          <!-- direction 2 -->
          <div class="mx-[9px] mt-[2px] h-[59px] border border-[#d8dcdc] bg-[#f0f5f5]">
            <div class="flex h-[22px] items-center justify-between pr-[6px] pl-[8px] text-[#3c8dbc]">方向 2<svg width="12" height="7"><use href="#up"/></svg></div>
            <div class="mt-[9px] flex h-[16px] items-center pl-[8px]">
              <span class="h-[13px] w-[13px] border border-[#888] bg-gradient-to-br from-[#ddd] to-[#f8f8f8]"></span>
              <span class="ml-[5px]">使用方向 2</span>
            </div>
          </div>
          <div class="mx-[9px] mt-[3px] flex h-[23px] items-center justify-between border border-[#d8dcdc] bg-[#f0f5f5] pr-[6px] pl-[8px] text-[#3c8dbc]">阵列增量<svg width="12" height="7"><use href="#down"/></svg></div>
          <div class="mx-[9px] mt-[3px] flex h-[23px] items-center justify-between border border-[#d8dcdc] bg-[#f0f5f5] pr-[6px] pl-[8px] text-[#3c8dbc]">实例点<svg width="12" height="7"><use href="#down"/></svg></div>
          <div class="mx-[9px] mt-[3px] flex h-[32px] items-center justify-between">
            <div class="flex items-center text-[#aaa]"><span class="h-[13px] w-[13px] border border-[#ccc]"></span><span class="ml-[5px]">使用电子表格</span></div>
            <div class="flex h-[32px] w-[32px] items-center justify-center border border-[#ddd]">
              <svg width="22" height="22" viewBox="0 0 22 22"><rect x="1" y="1" width="19" height="18" fill="#c4ccc4"/><path d="M1 5h19M1 9h19M1 13h19M7 1v18M13 1v18" stroke="#e8ece8"/><path d="M10 13l11 8" stroke="#8aa88a" stroke-width="2.500"/></svg>
            </div>
          </div>
          <div class="mx-[9px] mt-[2px] flex h-[23px] items-center justify-between border border-[#d8dcdc] bg-[#f0f5f5] pr-[6px] pl-[8px] text-[#3c8dbc]">方向<svg width="12" height="7"><use href="#down"/></svg></div>
          <div class="mx-[9px] mt-[3px] flex h-[23px] items-center justify-between border border-[#d8dcdc] bg-[#f0f5f5] pr-[6px] pl-[8px] text-[#3c8dbc]">阵列设置<svg width="12" height="7"><use href="#down"/></svg></div>
        </div>
        <!-- pattern method -->
        <div class="mt-[4px] h-[83px] bg-white">
          <div class="flex h-[26px] items-center justify-between pr-[6px] pl-[7px] text-[13px] text-[#2e8bc0]">阵列方法<svg width="13" height="8"><use href="#up"/></svg></div>
          <div class="mt-[4px] flex h-[25px] items-center justify-between px-[9px]">方法
            <div class="flex h-[25px] w-[141px] items-center justify-between border border-[#999] pr-[5px] pl-[4px]">变化<svg width="8" height="4"><use href="#caret"/></svg></div>
          </div>
          <div class="mx-[9px] mt-[2px] flex h-[23px] items-center justify-between border border-[#d8dcdc] bg-[#f0f5f5] pr-[6px] pl-[8px] text-[#3c8dbc]">可重用的引用<svg width="12" height="7"><use href="#down"/></svg></div>
        </div>
      </div>
      <!-- scrollbar -->
      <div class="ml-px flex h-[655px] w-[15px] flex-col">
        <div class="flex h-[16px] items-center justify-center border border-[#aaa] bg-gradient-to-b from-[#f4f4f4] to-[#ccc]"><svg width="7" height="4" viewBox="0 0 8 5"><polygon points="0,5 8,5 4,0" fill="#555"/></svg></div>
        <div class="flex h-[565px] items-center justify-center rounded-[2px] border border-[#2a70a8] bg-gradient-to-r from-[#cfe8f8] via-[#a8d8f6] to-[#7fc4ee]">
          <svg width="8" height="7" viewBox="0 0 8 7"><path d="M0 1h8M0 3.500h8M0 6h8" stroke="#2a70a8"/></svg>
        </div>
        <div class="mt-auto flex h-[16px] items-center justify-center border border-[#aaa] bg-gradient-to-b from-[#f4f4f4] to-[#ccc]"><svg width="7" height="4"><use href="#caret"/></svg></div>
      </div>
    </div>
    <div class="mt-[9px] flex justify-end gap-[5px] pr-[17px] text-[12px]">
      <div class="flex h-[25px] w-[54px] items-center justify-center border border-[#bbb] text-[#aaa]">确定</div>
      <div class="flex h-[25px] w-[54px] items-center justify-center border border-[#bbb] text-[#aaa]">应用</div>
      <div class="flex h-[25px] w-[54px] items-center justify-center border border-[#aaa] bg-[#d0d0d2]">取消</div>
    </div>
  </div>

  <!-- alert -->
  <div class="absolute top-[523px] left-[1071px] flex h-[74px] w-[285px] border border-[#aaa] bg-[#f0f5f5]">
    <div class="mt-[4px] ml-[3px] h-[63px] w-[8px] bg-[radial-gradient(#bbb_1.200px,transparent_1.300px)] bg-[length:4px_4px]"></div>
    <div class="mt-[4px] ml-[6px] h-[62px] w-[231px] bg-white pl-[9px] shadow-sm">
      <div class="h-[20px] pt-[2px] text-[14px] leading-[18px] text-[#3c8dbc]">警报</div>
      <div class="relative pr-[2px] pl-[23px] text-[12px] leading-[17px]">
        <svg class="absolute -top-[2px] -left-[3px]" width="15" height="15" viewBox="0 0 15 15"><circle cx="7.500" cy="7.500" r="7" fill="#d3101c"/><path d="M4.500 4.500l6 6M10.500 4.500l-6 6" stroke="#fff" stroke-width="2"/></svg>
        SB 折弯(6) 在没有所有父体时无法进行阵列。
      </div>
    </div>
    <div class="mt-[4px] ml-[7px] flex h-[24px] w-[24px] items-center justify-center border border-[#aaa] bg-[#f6f8f8]">
      <svg width="13" height="13" viewBox="0 0 13 13"><path d="M1.500 1.500l10 10M11.500 1.500l-10 10" stroke="#d3101c" stroke-width="3"/></svg>
    </div>
  </div>

  <!-- green badge, cut by the window edge -->
  <div class="absolute top-[643px] left-[1348px] flex h-[54px] w-[54px] items-start rounded-full border-2 border-[#dfe] bg-gradient-to-b from-[#7ddc8a] to-[#27b357] pt-[11px] pl-[9px] text-[12px] font-bold text-white">33</div>

  <!-- site watermark -->
  <svg class="absolute top-[632px] left-[1064px]" width="88" height="100" viewBox="1064 632 88 100">
    <polygon points="1107,634 1150,657 1150,708 1107,730 1066,708 1066,657" fill="#6f9ed3" stroke="#fff" stroke-width="2"/>
    <path d="M1107 634l43 23v51l-22-10c8-14 5-38-21-64zM1085 695l43 13-21 22-41-22c10 0 15-4 19-13z" fill="#7ccaf0"/>
    <polygon points="1107,653 1131,667 1131,694 1107,708 1084,694 1084,667" fill="#fff"/>
    <polygon points="1107,660 1126,670 1126,691 1107,702 1089,691 1089,670" fill="#6f9ed3"/>
    <polygon points="1107,680 1126,670 1126,691 1107,702" fill="#7ccaf0"/>
    <path d="M1089 670l18 10 19-10M1107 680v22" fill="none" stroke="#dbe9f7"/>
  </svg>
  <div class="absolute top-[648px] left-[1158px] w-[196px] text-center text-[45px] leading-[46px] font-black whitespace-nowrap text-[#7ccaf0] [-webkit-text-stroke:1px_#ffffff]">3D世界网</div>
  <div class="absolute top-[696px] left-[1160px] font-['Liberation_Sans',sans-serif] text-[17px] leading-[18px] font-bold tracking-[3.900px] whitespace-nowrap text-[#7ccaf0]">WWW.3DSJW.COM</div>

</body>
</html>
